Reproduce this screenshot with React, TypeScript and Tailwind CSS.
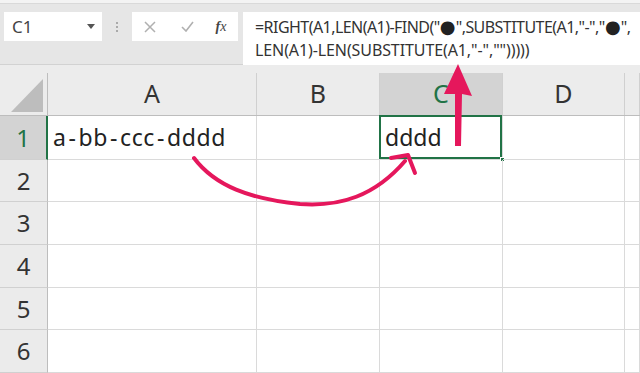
import React from "react";

const FONT = { fontFamily: '"Noto Sans", "Noto Sans CJK JP", sans-serif' };

const cols = [
  { label: "A", w: "w-[209px]" },
  { label: "B", w: "w-[123px]" },
  { label: "C", w: "w-[123px]" },
  { label: "D", w: "w-[122px]" },
  { label: "", w: "flex-1" },
];

const rowHeights = ["h-[44px]", "h-[42px]", "h-[43px]", "h-[43px]", "h-[42px]", "h-[43px]"];

function Dot() {
  return (
    <span
      className="inline-block w-[16px] text-center text-[18px] leading-none text-[#222] tracking-normal"
      style={{ fontFamily: '"DejaVu Sans", sans-serif' }}
    >
      ●
    </span>
  );
}

function Dash() {
  return <span className="px-[2px]">-</span>;
}

export default function App() {
  return (
    <div className="relative w-[640px] h-[373px] overflow-hidden bg-[#e6e6e6] text-[#222]" style={FONT}>
      {/* top strip */}
      <div className="h-[4px] bg-[#f3f3f3] border-b border-[#d9d9d9]" />
      {/* formula bar */}
      <div className="h-[61px] flex items-start pt-[8px] border-b border-[#d2d2d2]">
        <div className="ml-[4px] w-[98px] h-[29px] bg-white flex items-center pl-[8px] pr-[7px]">
          <span className="text-[17px] text-[#444] flex-1 leading-none">C1</span>
          <svg width="8" height="5" viewBox="0 0 8 5"><path d="M0 0 L8 0 L4 5 Z" fill="#555" /></svg>
        </div>
        <div className="w-[30px] h-[29px] flex flex-col items-center justify-center gap-[2px]">
          <span className="w-[2px] h-[2px] bg-[#aaa]" />
          <span className="w-[2px] h-[2px] bg-[#aaa]" />
          <span className="w-[2px] h-[2px] bg-[#aaa]" />
        </div>
        <div className="w-[106px] h-[29px] bg-white flex items-center">
          <div className="w-[36px] flex justify-center">
            <svg width="12" height="12" viewBox="0 0 12 12"><path d="M1 1 L11 11 M11 1 L1 11" stroke="#b0b0b0" strokeWidth="1.5" /></svg>
          </div>
          <div className="w-[38px] flex justify-center">
            <svg width="13" height="11" viewBox="0 0 13 11"><path d="M1 6 L5 10 L12 1" stroke="#b0b0b0" strokeWidth="1.6" fill="none" /></svg>
          </div>
          <div className="w-[30px] flex justify-center">
            <span className="text-[14px] italic text-[#444] leading-none" style={{ fontFamily: '"Liberation Serif", serif' }}>
              <span className="font-bold">f</span>x
            </span>
          </div>
        </div>
        <div className="ml-[5px] flex-1 h-[53px] bg-white pl-[12px] pt-[4px] text-[16px] leading-[23px] text-[#333] whitespace-nowrap">
          <div className="h-[23px] tracking-[-0.55px]">
            =RIGHT(A1,LEN(A1)-FIND(&quot;<Dot />&quot;,SUBSTITUTE(A1,&quot;-&quot;,&quot;<Dot />&quot;,
          </div>
          <div className="tracking-[-0.1px]">LEN(A1)-LEN(SUBSTITUTE(A1,&quot;-&quot;,&quot;&quot;)))))</div>
        </div>
      </div>
      {/* gap */}
      <div className="h-[8px] bg-[#ececec]" />
      {/* column headers */}
      <div className="flex h-[43px] bg-[#ececec] border-b border-[#bdbdbd]">
        <div className="w-[48px] border-r border-[#bdbdbd] flex items-end justify-end pr-[4px] pb-[3px]">
          <svg width="32" height="33" viewBox="0 0 32 33"><path d="M0 33 L32 0 L32 33 Z" fill="#bdbdbd" /></svg>
        </div>
        {cols.map((c) => (
          <div
            key={c.label || "e"}
            className={`${c.w} border-r border-[#d0d0d0] flex items-center justify-center text-[25px] ${
              c.label === "C" ? "bg-[#d3d3d3] text-[#217346]" : "text-[#333]"
            }`}
          >
            {c.label}
          </div>
        ))}
      </div>
      {/* rows */}
      {rowHeights.map((h, i) => (
        <div key={i} className={`flex ${h} bg-white`}>
          <div
            className={`w-[48px] flex items-center justify-center text-[24px] border-b border-[#d0d0d0] ${
              i === 0 ? "bg-[#d3d3d3] text-[#217346] border-r-2 border-r-[#217346]" : "bg-[#ebebeb] text-[#333] border-r border-r-[#bdbdbd]"
            }`}
          >
            {i + 1}
          </div>
          {cols.map((c, j) => (
            <div
              key={j}
              className={`${c.w} border-r border-b border-[#dadada] flex items-center pl-[5px] text-[23px] text-[#222] relative`}
            >
              {i === 0 && j === 0 ? (
                <span className="tracking-[0.6px]">
                  a<Dash />bb<Dash />ccc<Dash />dddd
                </span>
              ) : null}
              {i === 0 && j === 2 ? (
                <>
                  <span>dddd</span>
                  <div className="absolute -left-[1px] -top-[1px] right-0 bottom-0 border-2 border-[#217346]" />
                  <div className="absolute -right-[3px] -bottom-[3px] w-[5px] h-[5px] bg-[#217346] border border-white" />
                </>
              ) : null}
            </div>
          ))}
        </div>
      ))}
      {/* annotations */}
      <svg className="absolute left-0 top-0 pointer-events-none" width="640" height="373" viewBox="0 0 640 373">
        <path
          d="M194 158 C 215 186, 250 199, 300 204 C 340 207, 375 196, 405 161"
          stroke="#e5175c"
          strokeWidth="4"
          fill="none"
          strokeLinecap="round"
        />
        <path d="M391 158 L408 155 L415 173" stroke="#e5175c" strokeWidth="4" fill="none" strokeLinecap="round" strokeLinejoin="round" />
        <path d="M455 146 L461 146 L462 94 L472 96 L458 64 L444 94 L455 94 Z" fill="#e5175c" />
      </svg>
    </div>
  );
}
